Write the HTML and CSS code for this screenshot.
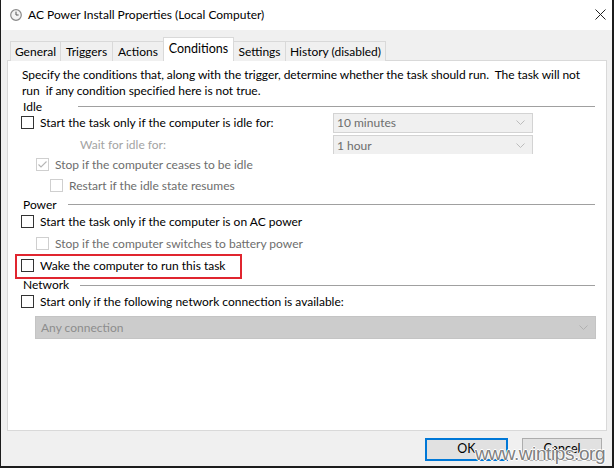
FILE: index.html
```html
<!DOCTYPE html>
<html>
<head>
<meta charset="utf-8">
<link rel="stylesheet" href="styles.css">
</head>
<body>
<div class="window">
  <div class="titlebar">
    <svg class="appicon" width="12" height="12" viewBox="0 0 12 12">
      <circle cx="6" cy="6" r="5.3" fill="#f4f4f4" stroke="#8a8a8a" stroke-width="1.2"/>
      <path d="M6 2.6V6H8.6" fill="none" stroke="#555" stroke-width="1"/>
    </svg>
    <span class="title">AC Power Install Properties (Local Computer)</span>
    <svg class="close" width="11" height="11" viewBox="0 0 11 11">
      <path d="M0.5 0.5L10.5 10.5M10.5 0.5L0.5 10.5" stroke="#222" stroke-width="1"/>
    </svg>
  </div>
  <div class="client">
    <div class="tabs">
      <div class="tab t1">General</div>
      <div class="tab t2">Triggers</div>
      <div class="tab t3">Actions</div>
      <div class="tab t4 selected">Conditions</div>
      <div class="tab t5">Settings</div>
      <div class="tab t6">History (disabled)</div>
    </div>
    <div class="panel">
      <p class="desc">Specify the conditions that, along with the trigger, determine whether the task should run.&nbsp; The task will not<br>run&nbsp; if any condition specified here is not true.</p>

      <div class="group idle-head"><span class="glabel idle-label">Idle</span><span class="gline"></span></div>
      <div class="row r-idle">
        <span class="cb"></span><span class="lbl">Start the task only if the computer is idle for:</span>
        <div class="combo c1"><span>10 minutes</span><svg class="chev" width="9" height="5" viewBox="0 0 9 5"><path d="M0.5 0.5L4.5 4.5L8.5 0.5" fill="none" stroke="#bcbcbc"/></svg></div>
      </div>
      <div class="row r-wait">
        <span class="lbl wait">Wait for idle for:</span>
        <div class="combo c2"><span>1 hour</span><svg class="chev" width="9" height="5" viewBox="0 0 9 5"><path d="M0.5 0.5L4.5 4.5L8.5 0.5" fill="none" stroke="#bcbcbc"/></svg></div>
      </div>
      <div class="row r-stop ind1">
        <span class="cb dis checked"><svg width="11" height="11" viewBox="0 0 11 11"><path d="M1.5 5.5L4 8L9.5 2.5" fill="none" stroke="#b5b5b5" stroke-width="1.1"/></svg></span><span class="lbl dim">Stop if the computer ceases to be idle</span>
      </div>
      <div class="row ind2">
        <span class="cb dis"></span><span class="lbl dim">Restart if the idle state resumes</span>
      </div>

      <div class="group power-head"><span class="glabel">Power</span><span class="gline"></span></div>
      <div class="row r-ac">
        <span class="cb"></span><span class="lbl">Start the task only if the computer is on AC power</span>
      </div>
      <div class="row ind1">
        <span class="cb dis"></span><span class="lbl dim">Stop if the computer switches to battery power</span>
      </div>
      <div class="row wake">
        <span class="cb"></span><span class="lbl">Wake the computer to run this task</span>
        <span class="redbox"></span>
      </div>

      <div class="group net-head"><span class="glabel">Network</span><span class="gline"></span></div>
      <div class="row">
        <span class="cb"></span><span class="lbl">Start only if the following network connection is available:</span>
      </div>
      <div class="combo c3"><span>Any connection</span><svg class="chev" width="9" height="5" viewBox="0 0 9 5"><path d="M0.5 0.5L4.5 4.5L8.5 0.5" fill="none" stroke="#b0b0b0"/></svg></div>
    </div>
    <div class="buttons">
      <button class="btn default">OK</button>
      <button class="btn">Cancel</button>
    </div>
  </div>
  <div class="watermark">www.wintips.org</div>
</div>
</body>
</html>
```

FILE: styles.css
```css
* { box-sizing: border-box; }
html, body { margin: 0; padding: 0; }
body {
  width: 614px;
  height: 468px;
  overflow: hidden;
  font-family: "Lato", "Open Sans", sans-serif;
  font-size: 12px;
  color: #000;
}
.window {
  position: relative;
  width: 614px;
  height: 468px;
  background: #f0f0f0;
  border-left: 1px solid #1c1c1c;
  border-right: 2px solid #1c1c1c;
  border-bottom: 2px solid #1c1c1c;
  display: flex;
  flex-direction: column;
}
.titlebar {
  height: 30px;
  background: #fff;
  display: flex;
  align-items: center;
  padding-left: 9px;
  flex: none;
}
.appicon { flex: none; }
.title {
  margin-left: 6px;
  font-size: 12px;
  flex: 1;
  margin-top: -1px;
}
.close { margin-right: 6px; margin-top: -1px; }
.client {
  flex: 1;
  display: flex;
  flex-direction: column;
  padding: 8px 5px 0 6px;
}
.tabs {
  display: flex;
  align-items: flex-end;
  height: 23px;
  padding-left: 3px;
  margin-bottom: -1px;
  position: relative;
  z-index: 1;
}
.tab {
  height: 20px;
  border: 1px solid #d9d9d9;
  border-bottom: none;
  border-right: none;
  text-align: center;
  line-height: 19px;
  background: #f0f0f0;
  white-space: nowrap;
}
.t1 { width: 50px; }
.t2 { width: 52px; }
.t3 { width: 51px; }
.t4 { width: 71px; }
.t5 { width: 51px; border-left: none; }
.t6 { width: 101px; border-right: 1px solid #d9d9d9; }
.tab.selected {
  height: 24px;
  background: #fff;
  border-right: 1px solid #d9d9d9;
  line-height: 21px;
  font-size: 12.5px;
}
.panel {
  height: 371px;
  background: #fff;
  border: 1px solid #d9d9d9;
  padding: 6px 11px 0 13px;
}
.desc {
  margin: 0 0 0 1px;
  line-height: 16px;
  white-space: nowrap;
  letter-spacing: -0.05px;
}
.group {
  display: flex;
  align-items: center;
  padding-left: 2px;
  padding-top: 2px;
}
.idle-head { height: 13px; }
.power-head { height: 15px; }
.net-head { height: 14px; padding-top: 4px; }
.glabel { flex: none; line-height: 12px; }
.idle-label { width: 44px; }
.gline {
  flex: 1;
  height: 1px;
  background: #a0a0a0;
  margin-left: 11px;
}
.row {
  position: relative;
  display: flex;
  align-items: center;
  height: 22px;
}
.r-idle { height: 21px; }
.r-wait { height: 21px; padding-top: 2px; }
.r-stop { height: 20px; }
.r-ac { height: 21px; }
.ind1 { padding-left: 15px; }
.ind2 { padding-left: 29px; }
.cb {
  width: 13px;
  height: 13px;
  border: 1px solid #333;
  background: #fff;
  flex: none;
  display: flex;
  align-items: center;
  justify-content: center;
}
.cb.dis { border-color: #cfcfcf; }
.lbl { margin-left: 6px; white-space: nowrap; }
.lbl.dim { color: #6d6d6d; }
.lbl.wait { margin-left: 59px; color: #a3a3a3; }
.combo {
  position: relative;
  display: flex;
  align-items: center;
  justify-content: space-between;
  border: 1px solid #d3d3d3;
  background: #f0f0f0;
  color: #6d6d6d;
  padding: 0 7px 0 3px;
}
.combo.c1 { margin-left: auto; width: 200px; height: 20px; margin-right: 62px; }
.combo.c2 { margin-left: auto; width: 200px; height: 19px; margin-right: 62px; border-bottom: none; }
.combo.c3 {
  margin-top: 4px;
  margin-left: 14px;
  width: 561px;
  height: 23px;
  background: #cccccc;
  border-color: #c4c4c4;
  color: #8c8c8c;
  padding-left: 5px;
}
.chev { flex: none; }
.wake .redbox {
  position: absolute;
  left: -6px;
  top: 0px;
  width: 227px;
  height: 25px;
  border: 2px solid #e0252f;
}
.buttons {
  display: flex;
  justify-content: flex-end;
  gap: 14px;
  padding-top: 7px;
  padding-right: 5px;
}
.btn {
  font-family: inherit;
  font-size: 12.5px;
  height: 23px;
  width: 80px;
  background: #e1e1e1;
  border: 1px solid #adadad;
  color: #000;
  padding: 0 0 3px;
}
.btn.default { border: 2px solid #0078d7; width: 83px; }
.watermark {
  position: absolute;
  left: 474px;
  top: 443px;
  font-family: "Liberation Sans", Arial, sans-serif;
  font-size: 19px;
  color: #808080;
  letter-spacing: -0.4px;
  text-shadow: 1px 0 0 #fff, -1px 0 0 #fff, 0 1px 0 #fff, 0 -1px 0 #fff;
}
```
